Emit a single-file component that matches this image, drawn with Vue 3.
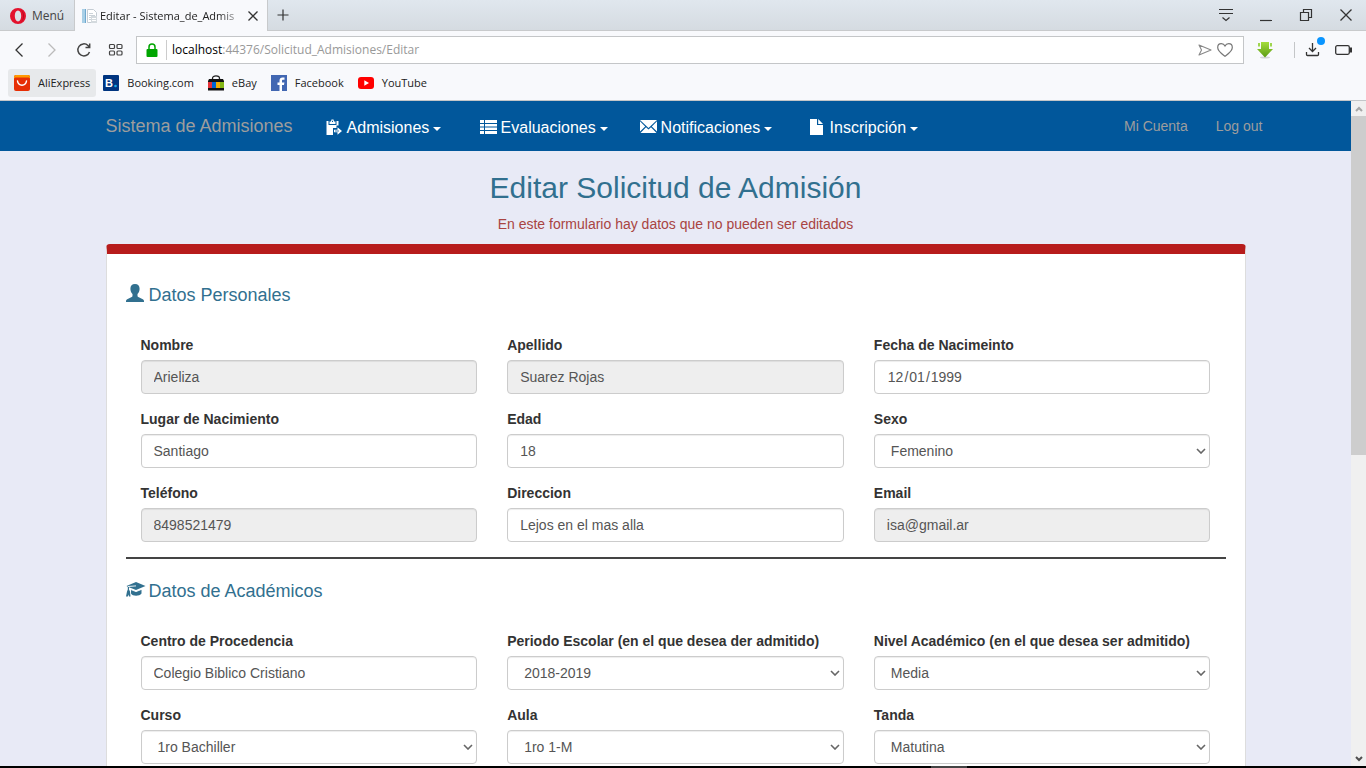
<script setup>
import { ref } from 'vue'

const address = ref('/Solicitud_Admisiones/Editar')

const personal = ref([
  { id: 'nombre', label: 'Nombre', type: 'text', value: 'Arieliza', locked: true },
  { id: 'apellido', label: 'Apellido', type: 'text', value: 'Suarez Rojas', locked: true },
  { id: 'fecha', label: 'Fecha de Nacimeinto', type: 'date', value: '1999-12-01' },
  { id: 'lugar', label: 'Lugar de Nacimiento', type: 'text', value: 'Santiago' },
  { id: 'edad', label: 'Edad', type: 'text', value: '18' },
  { id: 'sexo', label: 'Sexo', type: 'select', value: 'Femenino' },
  { id: 'telefono', label: 'Teléfono', type: 'text', value: '8498521479', locked: true },
  { id: 'direccion', label: 'Direccion', type: 'text', value: 'Lejos en el mas alla' },
  { id: 'email', label: 'Email', type: 'text', value: 'isa@gmail.ar', locked: true }
])

const academic = ref([
  { id: 'centro', label: 'Centro de Procedencia', type: 'text', value: 'Colegio Biblico Cristiano' },
  { id: 'periodo', label: 'Periodo Escolar (en el que desea der admitido)', type: 'select', value: '2018-2019' },
  { id: 'nivel', label: 'Nivel Académico (en el que desea ser admitido)', type: 'select', value: 'Media' },
  { id: 'curso', label: 'Curso', type: 'select', value: '1ro Bachiller' },
  { id: 'aula', label: 'Aula', type: 'select', value: '1ro 1-M' },
  { id: 'tanda', label: 'Tanda', type: 'select', value: 'Matutina' }
])

const sections = [
  { key: 'personal', title: 'Datos Personales', fields: personal },
  { key: 'academic', title: 'Datos de Académicos', fields: academic }
]
</script>

<template>
  <div class="window">
    <header class="chrome">
      <div class="tabbar">
        <button class="menu-btn" type="button">
          <svg width="16" height="16" viewBox="0 0 16 16"><path fill="#e3122d" fill-rule="evenodd" d="M8 0a8 8 0 1 0 0 16A8 8 0 0 0 8 0zm0 2.600c2 0 3.200 2.400 3.200 5.400S10 13.400 8 13.400 4.800 11 4.800 8 6 2.600 8 2.600z"/><path fill="#a3071c" d="M10.500 1.500A8 8 0 0 1 10.500 14.500C12.500 13 13.200 10.500 13.200 8s-.7-5-2.700-6.500z"/></svg>
          <span>Menú</span>
        </button>
        <div class="tab">
          <svg width="16" height="16" viewBox="0 0 16 16"><path fill="#a9cfe6" d="M0 1h4v14H0z"/><path fill="#6fa9cf" d="M3 1h1v14H3z"/><path fill="#fff" stroke="#c4ccd3" d="M5.500 1.500h6l3 3v10h-9z"/><path stroke="#cbd2d8" d="M7 5.500h4M7 7.500h6M7 9.500h6M7 11.500h5"/><path fill="#d4dade" d="M9 8h6v7H9z"/><path stroke="#fff" d="M10 10.500h4M10 12.500h4"/></svg>
          <span class="tab-title">Editar - Sistema_de_Admis</span>
          <button class="tab-close" type="button" aria-label="Cerrar pestaña">
            <svg width="10" height="10" viewBox="0 0 10 10"><path stroke="#333" stroke-width="1.300" d="M.5.5l9 9M9.500.5l-9 9"/></svg>
          </button>
        </div>
        <button class="new-tab" type="button" aria-label="Nueva pestaña">
          <svg width="12" height="12" viewBox="0 0 12 12"><path stroke="#333" stroke-width="1.200" d="M6 .5v11M.5 6h11"/></svg>
        </button>
        <div class="win-controls">
          <button type="button" aria-label="Pestañas"><svg width="14" height="14" viewBox="0 0 14 14"><path fill="none" stroke="#333" stroke-width="1.200" d="M0 1.500h14M0 5.500h14M3.500 9.500L7 12.500l3.500-3"/></svg></button>
          <button type="button" aria-label="Minimizar"><svg width="14" height="14" viewBox="0 0 14 14"><path stroke="#333" stroke-width="1.200" d="M1 12.500h12"/></svg></button>
          <button type="button" aria-label="Restaurar"><svg width="14" height="14" viewBox="0 0 14 14"><path fill="none" stroke="#333" stroke-width="1.200" d="M1.500 4.500h8v8h-8zM4.500 4.500v-3h8v8h-3"/></svg></button>
          <button type="button" aria-label="Cerrar"><svg width="14" height="14" viewBox="0 0 14 14"><path stroke="#333" stroke-width="1.300" d="M1.500 1.500l11 11M12.500 1.500l-11 11"/></svg></button>
        </div>
      </div>

      <div class="toolbar">
        <button class="tool" type="button" aria-label="Atrás"><svg width="16" height="16" viewBox="0 0 16 16"><path fill="none" stroke="#333" stroke-width="1.300" d="M10.500 1.500L4 8l6.500 6.500"/></svg></button>
        <button class="tool" type="button" aria-label="Adelante"><svg width="16" height="16" viewBox="0 0 16 16"><path fill="none" stroke="#bbb" stroke-width="1.300" d="M4.500 1.500L11 8l-6.500 6.500"/></svg></button>
        <button class="tool" type="button" aria-label="Recargar"><svg width="16" height="16" viewBox="0 0 16 16"><path fill="none" stroke="#444" stroke-width="1.500" d="M13.500 10A6 6 0 1 1 12 3.500l1.500 1.700M13.700 1.500v4h-4.200"/></svg></button>
        <button class="tool" type="button" aria-label="Marcación rápida"><svg width="14" height="14" viewBox="0 0 14 14"><g fill="none" stroke="#444" stroke-width="1.200"><rect x=".5" y="1.500" width="5" height="4" rx="1"/><rect x="8" y="1.500" width="5" height="4" rx="1"/><rect x=".5" y="8" width="5" height="4" rx="1"/><rect x="8" y="8" width="5" height="4" rx="1"/></g></svg></button>
        <div class="address">
          <svg class="lock" width="12" height="14" viewBox="0 0 12 14"><path fill="none" stroke="#00a500" stroke-width="1.500" d="M3 7V4a3 3 0 0 1 6 0v3"/><rect x=".5" y="6" width="11" height="8" rx="1" fill="#00a500"/></svg>
          <span class="url"><b>localhost</b>:44376{{ address }}</span>
          <button class="bare" type="button" aria-label="Enviar"><svg width="14" height="12" viewBox="0 0 14 12"><path fill="none" stroke="#888" stroke-width="1.100" stroke-linejoin="round" d="M1 1l12 5L1 11l2.500-5z"/></svg></button>
          <button class="bare" type="button" aria-label="Favorito"><svg width="16" height="14" viewBox="0 0 16 14"><path fill="none" stroke="#777" stroke-width="1.200" d="M8 13.300C5 11 .7 8.300.7 4.500.7 2.300 2.300.7 4.300.7 6 .7 7.300 1.600 8 3 8.700 1.600 10 .7 11.700.7c2 0 3.600 1.600 3.600 3.800 0 3.800-4.300 6.500-7.300 8.800z"/></svg></button>
        </div>
        <button class="bare ext" type="button" aria-label="Extensión"><svg width="16" height="16" viewBox="0 0 16 16"><defs><linearGradient id="arrow-green" x1="0" y1="0" x2="0" y2="1"><stop offset="0" stop-color="#a4dd3c"/><stop offset="1" stop-color="#5a9a13"/></linearGradient></defs><ellipse cx="8" cy="15.500" rx="5" ry="1" fill="#d2d4d6"/><path fill="url(#arrow-green)" d="M4 0h8v7h4l-8 8.500L0 7h4z"/><path fill="#9fd650" d="M1 1h2v3.500H1zM13 1h2v3.500h-2z"/></svg></button>
        <span class="divider"></span>
        <button class="bare download" type="button" aria-label="Descargas"><svg width="22" height="22" viewBox="0 0 22 22"><path fill="none" stroke="#333" stroke-width="1.300" d="M8.500 6v8.500M5 11l3.500 3.500L12 11M2.500 15v2.500a1 1 0 0 0 1 1h10a1 1 0 0 0 1-1V15"/><circle cx="17" cy="4" r="4" fill="#0a95ff"/></svg></button>
        <svg class="battery" width="17" height="10" viewBox="0 0 17 10"><rect x=".7" y=".7" width="13.600" height="8.600" rx="1.500" fill="none" stroke="#333" stroke-width="1.300"/><path fill="#333" d="M15 2.500h2v5h-2z"/></svg>
      </div>

      <nav class="bookmarks">
        <a href="#" class="active"><svg width="16" height="16" viewBox="0 0 16 16"><rect width="16" height="16" rx="2" fill="#e62e04"/><path fill="#f90" d="M2 0h12a2 2 0 0 1 2 2v2c0-1-1-1.500-2-1.500H2C1 2.500 0 3 0 4V2a2 2 0 0 1 2-2z"/><path fill="none" stroke="#fff" stroke-width="1.500" stroke-linecap="round" d="M3.500 6c.8 5.500 8.200 5.500 9 0"/></svg>AliExpress</a>
        <a href="#"><svg width="16" height="16" viewBox="0 0 16 16"><rect width="16" height="16" rx="1" fill="#003580"/><text x="2" y="12" class="b-logo" fill="#fff">B</text><circle cx="12.500" cy="11" r="1.300" fill="#16a9e8"/></svg>Booking.com</a>
        <a href="#"><svg width="16" height="16" viewBox="0 0 16 16"><path fill="none" stroke="#222" stroke-width="1.300" d="M4.500 5V3.500C4.500 0 11.500 0 11.500 3.500V5"/><path fill="#111" d="M1 4h14l1 2v9.500H0V6z"/><path fill="#e53238" d="M0 7h4v6H0z"/><path fill="#0064d2" d="M4 7h4v6H4z"/><path fill="#f5af02" d="M8 7h4v6H8z"/><path fill="#86b817" d="M12 7h4v6h-4z"/></svg>eBay</a>
        <a href="#"><svg width="16" height="16" viewBox="0 0 16 16"><path fill="#4267b2" d="M0 0h16v16H0z"/><path fill="#fff" d="M8.500 16V10H6.500V7.500h2V5.700c0-2 1.200-3.200 3-3.200h2v2.200h-1.300c-1 0-1.200.5-1.200 1.200v1.600h2.400L13 10h-2v6z"/></svg>Facebook</a>
        <a href="#"><svg width="16" height="16" viewBox="0 0 16 16"><rect y="2" width="16" height="12" rx="3" fill="red"/><path fill="#fff" d="M6.300 5.300L11 8l-4.700 2.700z"/></svg>YouTube</a>
      </nav>
    </header>

    <div class="viewport">
      <div class="page">
        <nav class="navbar">
          <div class="nav-inner">
            <a class="brand" href="#">Sistema de Admisiones</a>
            <div class="nav-menu">
              <a href="#"><svg width="16" height="16" viewBox="0 0 16 16"><path fill="#fff" d="M.5 2h12v14H.5z"/><path fill="#01579b" d="M2.500 2h8v4h-8z"/><path fill="#fff" fill-rule="evenodd" d="M3.500 5V2.500H5L5.500.5h2l.5 2h1.500V5zM6 1.800v1.200h1V1.800z"/><path fill="#01579b" d="M7 9h3.500V6.500H14V16H7z"/><path fill="#fff" d="M8 10.800h3.500V8.300L16 12l-4.500 3.700v-2.500H8z"/><path fill="#01579b" d="M9 11.600h4v.8H9z"/></svg>Admisiones<i class="caret"></i></a>
              <a href="#"><svg width="16" height="16" viewBox="0 0 16 16"><path fill="#fff" d="M0 1h4v3H0zM5 1h12v3H5zM0 5h4v2.500H0zM5 5h12v2.500H5zM0 8.500h4V11H0zM5 8.500h12V11H5zM0 12h4v3H0zM5 12h12v3H5z"/></svg>Evaluaciones<i class="caret"></i></a>
              <a href="#"><svg width="16" height="16" viewBox="0 0 16 16"><path fill="#fff" d="M0 1h17L8.500 9zM0 2.300L5.200 7.500 0 12.500zM17 2.300v10.200l-5.200-5zM6 8.300l2.500 2.300L11 8.300l5.500 5.700H.5z"/></svg>Notificaciones<i class="caret"></i></a>
              <a href="#"><svg width="16" height="16" viewBox="0 0 16 16"><path fill="#fff" d="M1 0h7v6h6v10H1zM9.200 0L14 5H9.200z"/></svg>Inscripción<i class="caret"></i></a>
            </div>
            <div class="nav-right">
              <a href="#">Mi Cuenta</a>
              <a href="#">Log out</a>
            </div>
          </div>
        </nav>

        <main class="container">
          <h1>Editar Solicitud de Admisión</h1>
          <p class="notice">En este formulario hay datos que no pueden ser editados</p>
          <form class="panel" @submit.prevent>
            <section v-for="s in sections" :key="s.key">
              <h2>
                <svg v-if="s.key === 'personal'" width="18" height="18" viewBox="0 0 18 18"><path fill="#31708f" d="M9 0c3 0 4.600 1.900 4.600 4.700 0 2.200-.8 4.200-2.100 5.400v1.700c0 .8.500 1.100 1.300 1.500l4 1.900c.8.400 1.200.9 1.200 1.700V18H0v-1.100c0-.8.400-1.300 1.200-1.700l4-1.900c.8-.4 1.300-.7 1.300-1.500v-1.700C5.200 8.900 4.400 6.900 4.400 4.700 4.400 1.900 6 0 9 0z"/></svg>
                <svg v-else width="18" height="18" viewBox="0 0 18 18"><path fill="#31708f" d="M10 2l9.500 4L10 10 3 7.200v2.300l1 2 .5 5H3l-.5-2-.7 2H0l1-5 .8-2V6.700L.5 6z"/><path fill="#31708f" d="M5 9.500l5 2 5.500-2v4C13.500 16.500 6.500 16.500 5 13.500z"/><path fill="none" stroke="#fff" stroke-width=".9" d="M2 6.500l8-.6M4.500 9.400l5.500 2.200 6-2.400"/></svg>
                {{ s.title }}
              </h2>
              <div class="grid">
                <div v-for="f in s.fields.value" :key="f.id" class="field">
                  <label :for="f.id">{{ f.label }}</label>
                  <select v-if="f.type === 'select'" :id="f.id" v-model="f.value" class="control">
                    <option>{{ f.value }}</option>
                  </select>
                  <input v-else :id="f.id" v-model="f.value" class="control" :type="f.type" :readonly="f.locked">
                </div>
              </div>
            </section>
          </form>
        </main>
      </div>
      <div class="scrollbar">
        <button type="button" aria-label="Subir"><svg width="8" height="6" viewBox="0 0 8 6"><path fill="none" stroke="#a6a6a6" stroke-width="2" d="M1 5l3-3 3 3"/></svg></button>
        <div class="track"><div class="thumb"></div><div class="rest"></div></div>
        <button type="button" aria-label="Bajar"><svg width="8" height="6" viewBox="0 0 8 6"><path fill="none" stroke="#505050" stroke-width="2" d="M1 1l3 3 3-3"/></svg></button>
      </div>
    </div>
    <div class="taskbar-edge"></div>
  </div>
</template>

<style>
body { margin: 0; overflow: hidden; }
</style>

<style scoped>
* { box-sizing: border-box; }
svg { display: block; flex: none; overflow: visible; }
a { text-decoration: none; color: inherit; }
button { border: 0; padding: 0; margin: 0; background: none; font: inherit; color: inherit; display: flex; align-items: center; justify-content: center; }

.window { height: 100vh; display: flex; flex-direction: column; font-family: "Liberation Sans", Arial, sans-serif; font-size: 14px; line-height: 20px; color: #333; }
.chrome { flex: none; background: #f8f9fc; border-bottom: 1px solid #c3c6c9; font-family: "Open Sans", "Noto Sans", sans-serif; font-size: 12px; line-height: 16px; color: #222; }

.tabbar { display: flex; height: 31px; background: linear-gradient(#e0e7ee, #d5dbe1); border-bottom: 1px solid #c8cacc; }
.menu-btn { width: 74px; gap: 6px; padding-top: 2px; color: #444; }
.tab { display: flex; align-items: center; width: 194px; height: 31px; padding: 0 0 0 7px; background: #f8f9fc; border: solid #c8cacc; border-width: 0 1px; }
.tab-title { flex: 1; margin-left: 2px; white-space: nowrap; font-size: 11px; mask-image: linear-gradient(to right, #000 85%, rgba(0, 0, 0, .3)); }
.tab-close { width: 28px; height: 28px; }
.new-tab { width: 30px; }
.win-controls { display: flex; margin-left: auto; }
.win-controls button { width: 40px; }

.toolbar { display: flex; align-items: center; height: 38px; padding: 0 14px 0 4px; }
.tool { width: 32px; height: 32px; }
.address { flex: 1; display: flex; align-items: center; height: 28px; margin-left: 4px; padding: 0 10px 0 9px; gap: 5px; background: #fff; border: 1px solid #c4c6c8; }
.url { flex: 1; margin-left: 3px; padding-left: 5px; border-left: 1px solid #ccc; line-height: 20px; color: #999; }
.url b { font-weight: 400; color: #000; }
.ext { margin-left: 13px; }
.divider { width: 1px; height: 16px; margin: 0 9px 0 21px; background: #c4c6c8; }
.download { margin-right: 9px; height: 26px; align-items: flex-start; }

.bookmarks { display: flex; height: 31px; padding-left: 8px; gap: 1px; font-size: 11px; }
.bookmarks a { display: flex; align-items: center; height: 28px; padding: 0 7px 0 6px; gap: 8px; border-radius: 3px; }
.bookmarks .active { padding-right: 6px; background: #e7e9eb; }
.b-logo { font-family: "Liberation Sans", Arial, sans-serif; font-size: 11px; font-weight: 700; }

.viewport { flex: 1; min-height: 0; display: flex; background: #e8eaf6; }
.page { flex: 1; min-width: 0; overflow: hidden; }

.navbar { height: 50px; background: #01579b; color: #9d9d9d; }
.nav-inner { display: flex; align-items: center; height: 50px; max-width: 1174px; margin: 0 auto; padding-left: 17px; }
.brand { margin-right: 33px; font-size: 18px; }
.nav-menu { display: grid; grid-template-columns: 154px 160px 169px auto; padding-top: 3px; font-size: 16px; color: #fff; }
.nav-menu a { display: flex; align-items: center; gap: 4px; }
.nav-menu svg { margin: 0 1px 2px 0; }
.caret { border: 4px solid transparent; border-top-color: #fff; border-bottom: 0; margin-top: 2px; }
.nav-right { display: flex; gap: 28px; margin-left: auto; }

.container { max-width: 1140px; margin: 0 auto; padding-top: 20px; }
h1 { margin: 0 0 10px; font-size: 30px; line-height: 33px; font-weight: 400; color: #31708f; text-align: center; }
.notice { margin: 0 0 10px; color: #a94442; text-align: center; }
.panel { padding: 9px 19px 0; background: #fff; border: 1px solid #ddd; border-top: 10px solid #b71c1c; border-radius: 4px; }
section { border-bottom: 2px solid #444; }
h2 { display: flex; align-items: center; gap: 5px; margin: 0; padding: 22px 0 30px; font-size: 18px; line-height: 20px; font-weight: 400; color: #31708f; }
h2 svg { margin: -2px 0 2px; }
.grid { display: grid; grid-template-columns: repeat(3, minmax(0, 1fr)); column-gap: 30px; padding: 0 15px; }
.field { margin-bottom: 15px; }
label { display: block; margin-bottom: 5px; font-weight: 700; }
.control { display: block; width: 100%; height: 34px; padding: 6px 12px; font: inherit; color: #555; background-color: #fff; border: 1px solid #ccc; border-radius: 4px; box-shadow: inset 0 1px 1px rgba(0, 0, 0, .075); }
.control[readonly] { background-color: #eee; }
.control::-webkit-calendar-picker-indicator { display: none; }
select.control { appearance: none; padding: 6px 16px; background-image: url("data:image/svg+xml,%3Csvg xmlns='http://www.w3.org/2000/svg' width='10' height='6' viewBox='0 0 10 6'%3E%3Cpath fill='none' stroke='%23666' stroke-width='1.600' d='M1 1l4 4 4-4'/%3E%3C/svg%3E"); background-repeat: no-repeat; background-position: right 3px center; }

.scrollbar { flex: none; display: flex; flex-direction: column; width: 15px; background: #f0f0f0; }
.scrollbar button { width: 15px; height: 15px; }
.track { flex: 1; display: flex; flex-direction: column; }
.thumb { flex: 8; background: #cdcdcd; }
.rest { flex: 7; }
.taskbar-edge { flex: none; height: 2px; background: linear-gradient(#444, #444) 70% 0 / 36px 2px no-repeat #000; }
</style>
